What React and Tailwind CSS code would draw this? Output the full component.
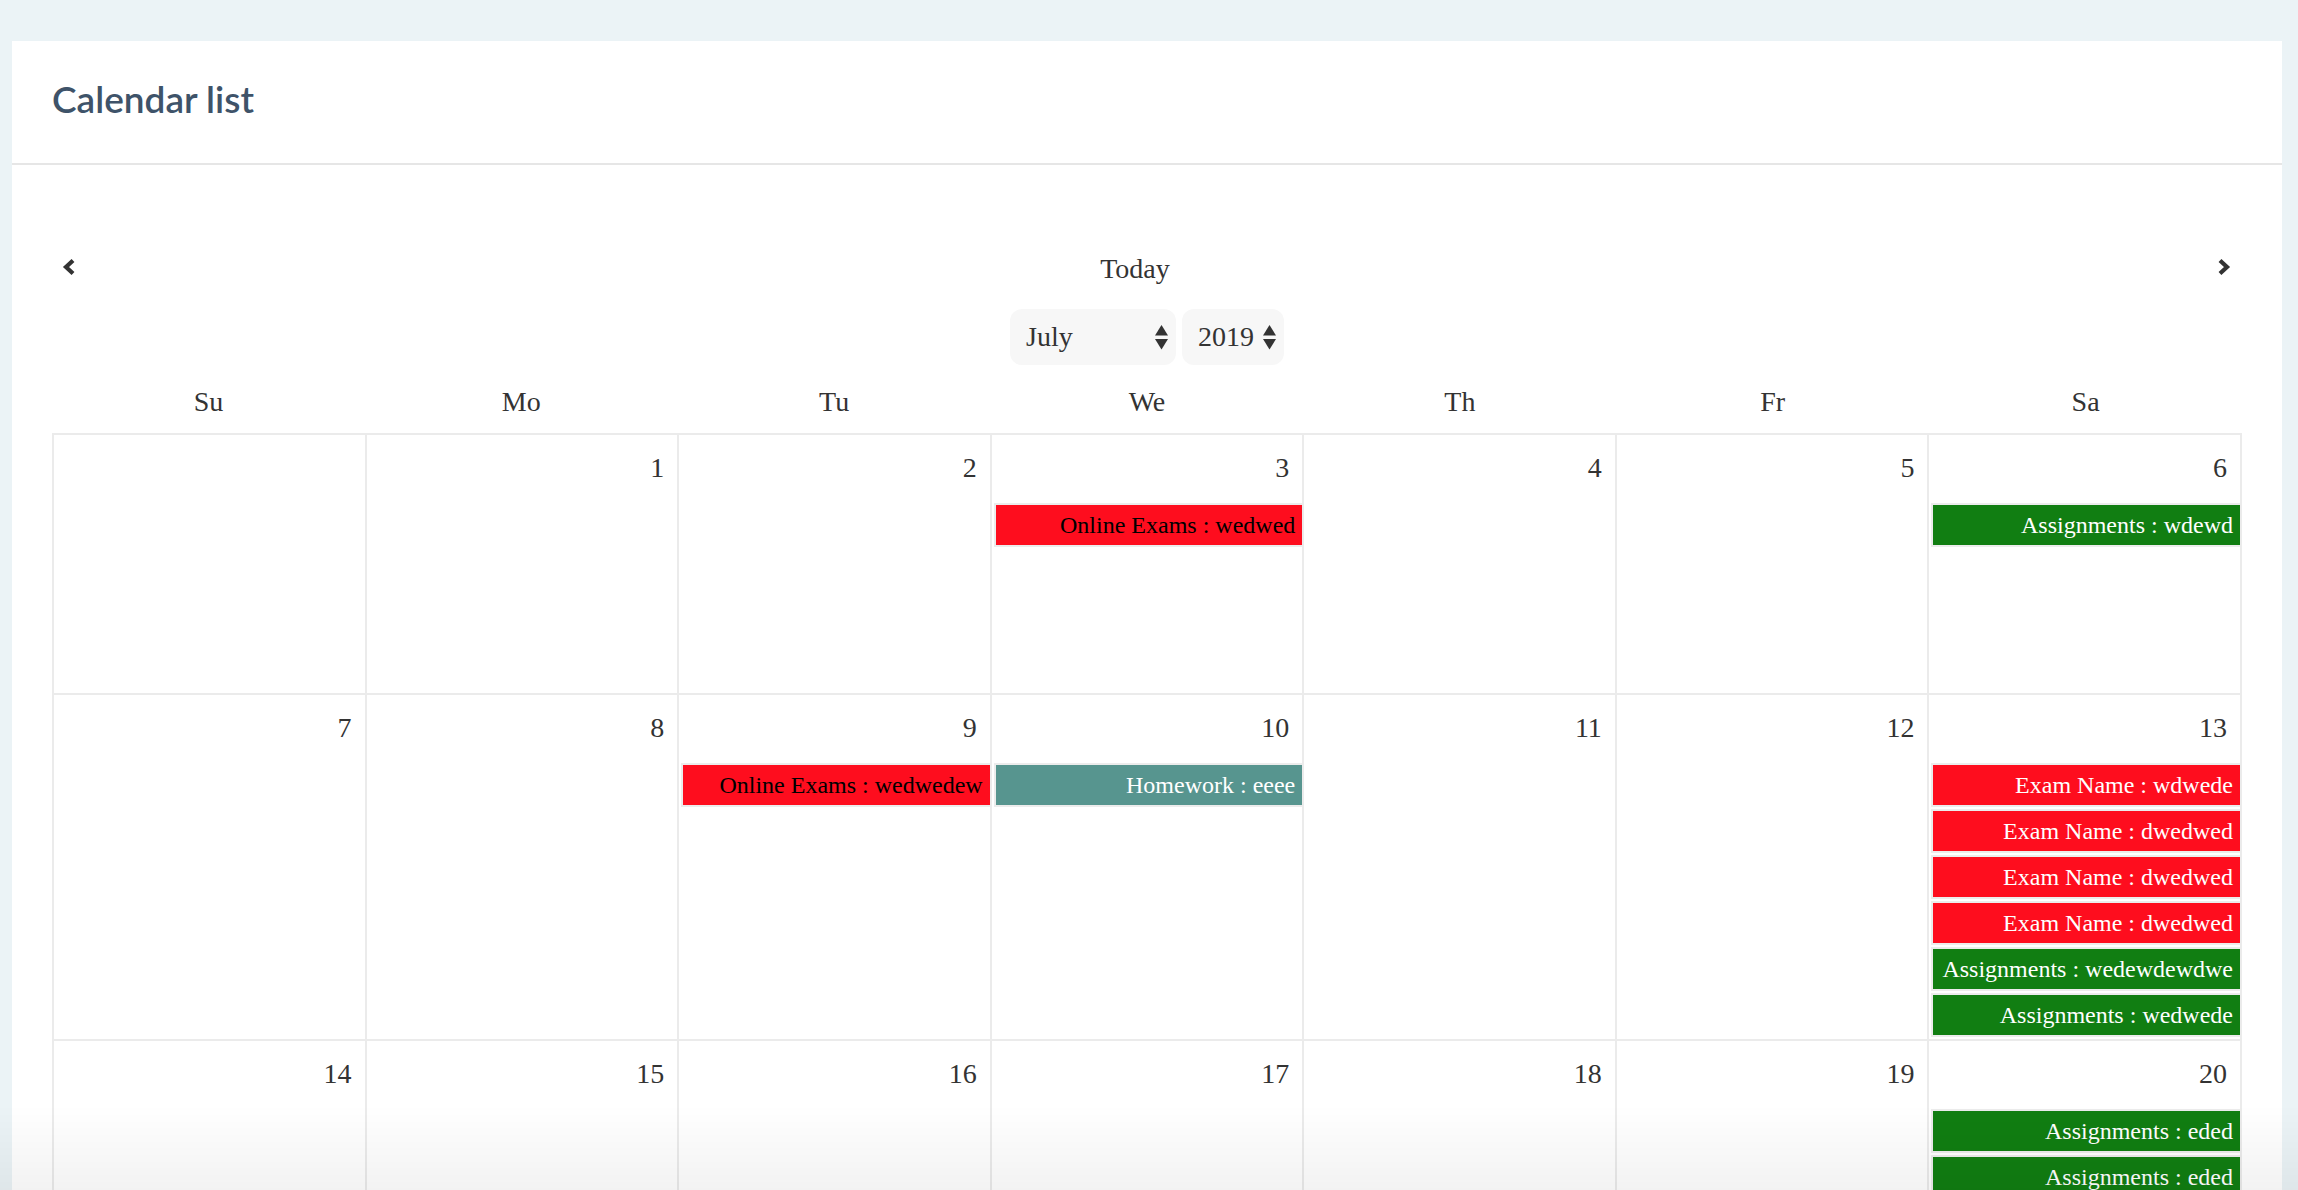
import React from "react";

const RED = "bg-[#fe0d1e]";
const GREEN = "bg-[#117e12]";
const TEAL = "bg-[#57958f]";

const events = {
  3: [{ label: "Online Exams : wedwed", color: RED, dark: true }],
  6: [{ label: "Assignments : wdewd", color: GREEN }],
  9: [{ label: "Online Exams : wedwedew", color: RED, dark: true }],
  10: [{ label: "Homework : eeee", color: TEAL }],
  13: [
    { label: "Exam Name : wdwede", color: RED },
    { label: "Exam Name : dwedwed", color: RED },
    { label: "Exam Name : dwedwed", color: RED },
    { label: "Exam Name : dwedwed", color: RED },
    { label: "Assignments : wedewdewdwe", color: GREEN },
    { label: "Assignments : wedwede", color: GREEN },
  ],
  20: [
    { label: "Assignments : eded", color: GREEN },
    { label: "Assignments : eded", color: GREEN },
  ],
};

const weekDays = ["Su", "Mo", "Tu", "We", "Th", "Fr", "Sa"];

// July 2019 starts on a Monday
const cells = [null, ...Array.from({ length: 31 }, (_, i) => i + 1)];
while (cells.length % 7) cells.push(null);

function Chevron({ dir }) {
  return (
    <svg width="15" height="18" viewBox="0 0 15 18" className="text-[#333]">
      <polyline
        points={dir === "left" ? "12,2.5 5,9 12,15.5" : "3,2.5 10,9 3,15.5"}
        fill="none"
        stroke="currentColor"
        strokeWidth="4.2"
        strokeLinejoin="miter"
      />
    </svg>
  );
}

function SortArrows() {
  return (
    <svg width="13" height="25" viewBox="0 0 13 25" className="text-[#333]">
      <path d="M6.5 0 L13 10.5 L0 10.5 Z" fill="currentColor" />
      <path d="M0 14 L13 14 L6.5 24.5 Z" fill="currentColor" />
    </svg>
  );
}

function FakeSelect({ value, width }) {
  return (
    <div
      className={`flex h-[56px] items-center justify-between rounded-[12px] bg-[#f7f7f7] pl-[16px] pr-[8px] text-[28px] text-[#333] ${width}`}
    >
      <span className="leading-none">{value}</span>
      <SortArrows />
    </div>
  );
}

function EventBar({ ev }) {
  return (
    <div
      className={`ml-[2px] mb-[2px] border-y-2 border-l-2 border-[#ececec] ${ev.color}`}
    >
      <div
        className={`h-[40px] overflow-hidden whitespace-nowrap pr-[7px] text-right text-[24px] leading-[40px] ${
          ev.dark ? "text-black" : "text-white"
        }`}
      >
        {ev.label}
      </div>
    </div>
  );
}

export default function App() {
  return (
    <div
      className="min-h-screen bg-[#ebf3f6] pl-[12px] pr-[16px] pt-[41px]"
      style={{ fontFamily: '"Liberation Serif", "Times New Roman", serif' }}
    >
      <div className="bg-white">
        {/* Header */}
        <div className="border-b-2 border-[#e6e6e6] px-[40px] pt-[36px] pb-[43px]">
          <h1
            className="text-[37px] font-semibold leading-[43px] text-[#3e5369]"
            style={{ fontFamily: "Lato, 'Noto Sans', sans-serif" }}
          >
            Calendar list
          </h1>
        </div>

        {/* Calendar */}
        <div className="px-[40px] pt-[86px] pb-[40px] text-[#333]">
          <div className="flex h-[36px] items-start justify-between pl-[9px] pr-[10px]">
            <button className="mt-[7px]">
              <Chevron dir="left" />
            </button>
            <span className="mr-[23px] text-[28px] leading-[36px]">Today</span>
            <button className="mt-[7px]">
              <Chevron dir="right" />
            </button>
          </div>

          <div className="mt-[22px] flex justify-center gap-[6px]">
            <FakeSelect value="July" width="w-[166px]" />
            <FakeSelect value="2019" width="w-[102px]" />
          </div>

          <div className="mt-[19px] mb-[13px] grid grid-cols-7">
            {weekDays.map((d) => (
              <div key={d} className="text-center text-[28px] leading-[36px]">
                {d}
              </div>
            ))}
          </div>

          <div className="grid grid-cols-7 border-l-2 border-t-2 border-[#ebebeb]">
            {cells.map((day, i) => (
              <div
                key={i}
                className="min-h-[260px] border-b-2 border-r-2 border-[#ebebeb]"
              >
                {day && (
                  <>
                    <div className="pt-[15px] pr-[13px] text-right text-[28px] leading-[36px]">
                      {day}
                    </div>
                    <div className="mt-[17px]">
                      {(events[day] || []).map((ev, k) => (
                        <EventBar key={k} ev={ev} />
                      ))}
                    </div>
                  </>
                )}
              </div>
            ))}
          </div>
        </div>
      </div>

      {/* bottom fade of the viewport */}
      <div className="pointer-events-none fixed inset-x-0 bottom-0 h-[85px] bg-gradient-to-b from-transparent to-black/5" />
    </div>
  );
}
